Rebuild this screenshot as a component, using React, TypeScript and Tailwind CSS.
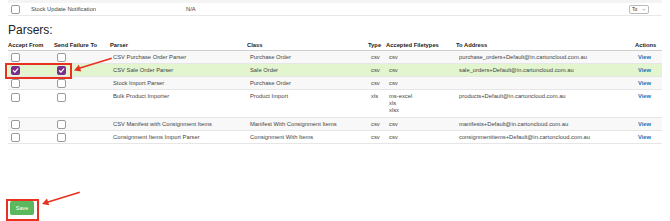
import { useState } from "react";

type Parser = {
  name: string;
  cls: string;
  type: string;
  filetypes: string[];
  address: string;
  accept: boolean;
  fail: boolean;
};

const parsers: Parser[] = [
  { name: "CSV Purchase Order Parser", cls: "Purchase Order", type: "csv", filetypes: ["csv"], address: "purchase_orders+Default@in.cartoncloud.com.au", accept: false, fail: false },
  { name: "CSV Sale Order Parser", cls: "Sale Order", type: "csv", filetypes: ["csv"], address: "sale_orders+Default@in.cartoncloud.com.au", accept: true, fail: true },
  { name: "Stock Import Parser", cls: "Purchase Order", type: "csv", filetypes: ["csv"], address: "", accept: false, fail: false },
  { name: "Bulk Product Importer", cls: "Product Import", type: "xls", filetypes: ["ms-excel", "xls", "xlsx"], address: "products+Default@in.cartoncloud.com.au", accept: false, fail: false },
  { name: "CSV Manifest with Consignment Items", cls: "Manifest With Consignment Items", type: "csv", filetypes: ["csv"], address: "manifests+Default@in.cartoncloud.com.au", accept: false, fail: false },
  { name: "Consignment Items Import Parser", cls: "Consignment With Items", type: "csv", filetypes: ["csv"], address: "consignmentitems+Default@in.cartoncloud.com.au", accept: false, fail: false },
];

const cols = "grid grid-cols-[46px_56px_137px_121px_18px_70px_179px_27px]";

function Check({ checked, onClick }: { checked: boolean; onClick?: () => void }) {
  if (checked) {
    return (
      <button onClick={onClick} className="w-[9px] h-[9px] rounded-[2px] bg-[#7b2d8e] flex items-center justify-center">
        <svg width="7" height="7" viewBox="0 0 10 10">
          <path d="M2 5.2 L4.2 7.4 L8.2 2.6" fill="none" stroke="white" strokeWidth="1.8" strokeLinecap="round" strokeLinejoin="round" />
        </svg>
      </button>
    );
  }
  return <button onClick={onClick} className="w-[9px] h-[9px] rounded-[2px] border border-[#9a9a9a] bg-white" />;
}

export default function App() {
  const [rows, setRows] = useState(parsers);
  const [notify, setNotify] = useState(false);

  function toggle(i: number, key: "accept" | "fail") {
    setRows(rows.map((r, j) => (j === i ? { ...r, [key]: !r[key] } : r)));
  }

  return (
    <div className="relative w-[670px] h-[221px] bg-white overflow-hidden text-[#444] font-['Liberation_Sans',Arial,sans-serif]">
      <div className="px-[8px]">
        {/* previous section, last row */}
        <div className="h-[3px] bg-[#f4f4f4]" />
        <div className="h-[13px] flex items-center border-b border-[#e8e8e8] text-[5.8px] leading-[7px]">
          <div className="w-[23px] pl-[3px] flex">
            <Check checked={notify} onClick={() => setNotify(!notify)} />
          </div>
          <div className="w-[155px]">Stock Update Notification</div>
          <div className="flex-1">N/A</div>
          <div className="mr-[13px] w-[20px] h-[9px] border border-[#bbb] rounded-[2px] flex items-center justify-between px-[2px] text-[5px] text-[#333]">
            <span>To</span>
            <svg width="4" height="3" viewBox="0 0 8 5">
              <path d="M1 1 L4 4 L7 1" fill="none" stroke="#888" strokeWidth="1.2" />
            </svg>
          </div>
        </div>

        <h2 className="mt-[7px] text-[12px] leading-[14px] text-[#222]">Parsers:</h2>

        <div className={`${cols} h-[14px] items-end pb-[1px] border-b border-[#cfcfcf] text-[5.8px] leading-[7px] font-bold text-[#222]`}>
          <div>Accept From</div>
          <div>Send Failure To</div>
          <div>Parser</div>
          <div>Class</div>
          <div>Type</div>
          <div>Accepted Filetypes</div>
          <div>To Address</div>
          <div>Actions</div>
        </div>

        {rows.map((r, i) => {
          const multi = r.filetypes.length > 1;
          const bg = r.accept && r.fail ? "bg-[#e2f5cf]" : i % 2 === 0 ? "bg-[#f8f8f8]" : "bg-white";
          return (
            <div
              key={r.name}
              className={`${cols} ${bg} ${multi ? "h-[28px] items-start pt-[3px]" : "h-[13px] items-center"} border-b border-[#e6e6e6] text-[5.8px] leading-[7px]`}
            >
              <div className="pl-[3px] flex">
                <Check checked={r.accept} onClick={() => toggle(i, "accept")} />
              </div>
              <div className="pl-[3px] flex">
                <Check checked={r.fail} onClick={() => toggle(i, "fail")} />
              </div>
              <div className="pl-[3px] whitespace-nowrap">{r.name}</div>
              <div className="pl-[3px] whitespace-nowrap">{r.cls}</div>
              <div className="pl-[3px]">{r.type}</div>
              <div className="pl-[3px]">
                {r.filetypes.map((f) => (
                  <div key={f}>{f}</div>
                ))}
              </div>
              <div className="pl-[3px] whitespace-nowrap">{r.address}</div>
              <div className="pl-[3px] font-bold text-[#1f72b8]">View</div>
            </div>
          );
        })}

        <div className="mt-[57px] pl-[2px] flex">
          <button className="w-[24px] h-[14px] rounded-[2px] bg-[#5cb85c] text-white text-[5.5px] leading-[14px]">Save</button>
        </div>
      </div>

      {/* annotations */}
      <div className="absolute left-[5px] top-[63px] w-[67px] h-[16px] border-2 border-[#e8321f] pointer-events-none" />
      <div className="absolute left-[6px] top-[199px] w-[33px] h-[22px] border-2 border-[#e8321f] pointer-events-none" />
      <svg className="absolute left-0 top-0 pointer-events-none" width="670" height="221">
        <line x1="111" y1="58.5" x2="80" y2="68" stroke="#e8321f" strokeWidth="1.8" strokeLinecap="round" />
        <polygon points="74,70.5 81.2,71.6 78.9,64.7" fill="#e8321f" />
        <line x1="79" y1="192.5" x2="48" y2="202" stroke="#e8321f" strokeWidth="1.8" strokeLinecap="round" />
        <polygon points="42,204 49.2,205.2 47,198.6" fill="#e8321f" />
      </svg>
    </div>
  );
}
